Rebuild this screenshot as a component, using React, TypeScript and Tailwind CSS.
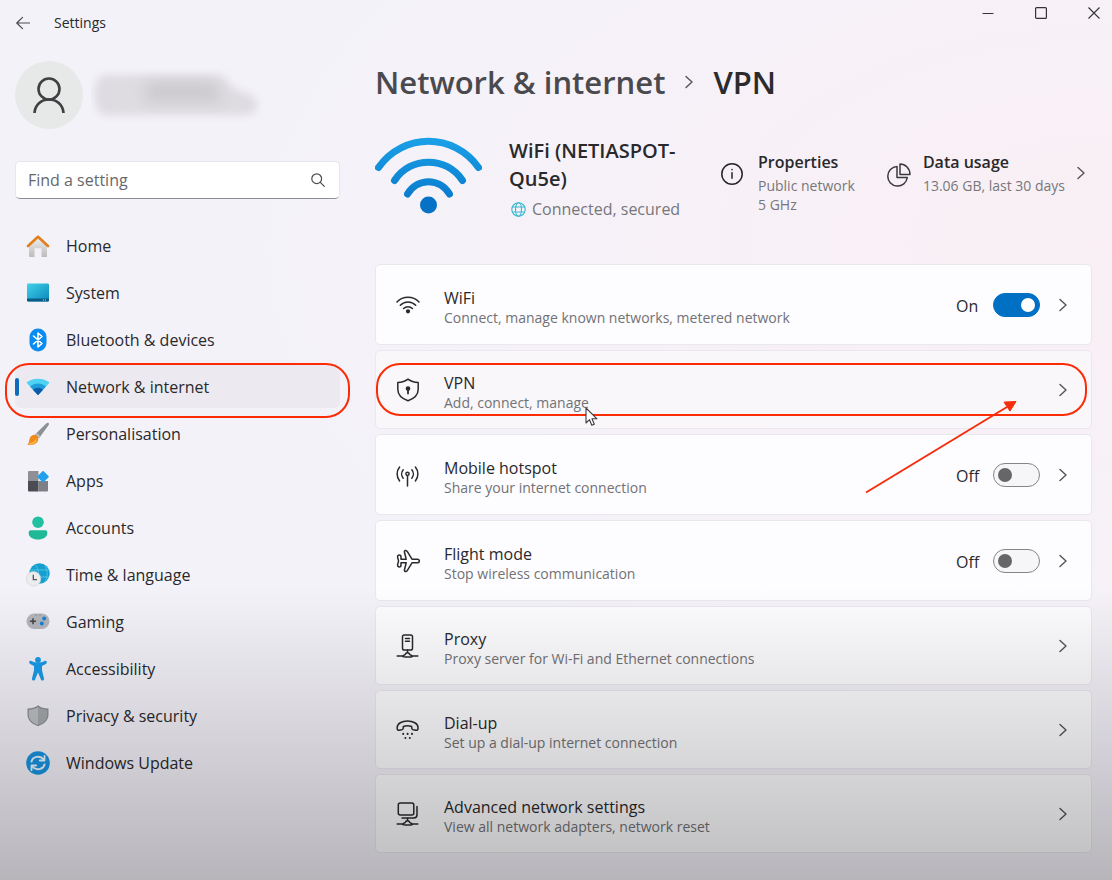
import { useId, useState, type ReactNode } from 'react'

type NavItem = { label: string; icon: ReactNode }
type Setting = { title: string; text: string; icon: ReactNode; toggle?: boolean; on?: boolean }

function HomeIcon() {
    return (
        <svg width="24" height="24" viewBox="0 0 24 24">
            <defs>
                <linearGradient id="home-wall" x1="0" y1="0" x2="0" y2="1">
                    <stop offset="0" stopColor="#f0eeee" />
                    <stop offset="1" stopColor="#bdbbbc" />
                </linearGradient>
            </defs>
            <path d="M3 10 12 3l9 7v12.200a.9.9 0 0 1-.9.9H15.500v-8a.8.8 0 0 0-.8-.8H9.300a.8.8 0 0 0-.8.8v8H3.900a.9.9 0 0 1-.9-.9Z" fill="url(#home-wall)" />
            <path d="M2 12 12 2.800 22 12" fill="none" stroke="#e07f1c" strokeWidth="2.600" strokeLinecap="round" strokeLinejoin="round" />
        </svg>
    )
}

function SystemIcon() {
    return (
        <svg width="24" height="24" viewBox="0 0 24 24">
            <defs>
                <linearGradient id="sys" x1="0" y1="0" x2="1" y2="1">
                    <stop offset="0" stopColor="#3fd3e8" />
                    <stop offset="1" stopColor="#0b86bb" />
                </linearGradient>
            </defs>
            <rect x="1" y="2.500" width="22" height="18" rx="1.200" fill="url(#sys)" />
            <path d="M1 17.500h22v1.800a1.200 1.200 0 0 1-1.200 1.200H2.200A1.200 1.200 0 0 1 1 19.300Z" fill="#0d5c86" />
            <path d="M17 19h1m1 0h1" stroke="#9fe0f5" strokeWidth="1" />
        </svg>
    )
}

function BluetoothIcon() {
    return (
        <svg width="24" height="24" viewBox="0 0 24 24">
            <rect x="3.500" y="0.500" width="17" height="23" rx="8.500" fill="#0a8bf2" />
            <path d="m7.500 8 8.500 7.500-4 3.500V5l4 3.500L7.500 16" fill="none" stroke="#fff" strokeWidth="1.600" strokeLinejoin="round" strokeLinecap="round" />
        </svg>
    )
}

function NetworkIcon() {
    return (
        <svg width="24" height="24" viewBox="0 0 24 24">
            <path d="M1 8.200a.8.8 0 0 1 0-1.100C7 2.600 17 2.600 23 7.100a.8.8 0 0 1 0 1.100L12.600 19.600a.8.8 0 0 1-1.200 0Z" fill="#4fd2f3" />
            <path d="M4 11.500c4.500-4 11.500-4 16 0l-7.400 8.100a.8.8 0 0 1-1.200 0Z" fill="#1e9fdc" />
            <path d="M7 14.800c3-2.600 7-2.600 10 0l-4.400 4.800a.8.8 0 0 1-1.200 0Z" fill="#0c5ba8" />
        </svg>
    )
}

function BrushIcon() {
    return (
        <svg width="24" height="24" viewBox="0 0 24 24">
            <path d="M22.300.8c.9.500.8 1.500.4 2.200L13 16.200 9 12.600 20.500 1.300c.5-.5 1.200-.8 1.800-.5Z" fill="#8c9196" />
            <path d="m10.800 10.900 3.600 3.300L13 16.200l-4-3.600Z" fill="#b9bdc1" />
            <path d="M8.600 12.800c2.600.3 4 2.200 3.700 4.600C11.700 22 6 23.700 1 22.500c1.800-1 1.900-2.400 2.300-4.600.5-3 2.600-5.300 5.300-5.100Z" fill="#f08a1d" />
            <path d="M4 21.500c2 0 5-1 6-3.500" fill="none" stroke="#ffc04d" strokeWidth="1.200" strokeLinecap="round" />
        </svg>
    )
}

function AppsIcon() {
    return (
        <svg width="24" height="24" viewBox="0 0 24 24">
            <path d="M3 2h9.500v10H2V3a1 1 0 0 1 1-1Z" fill="#8f9096" />
            <path d="M2 12h10.500v10.500H3a1 1 0 0 1-1-1Z" fill="#4b4c53" />
            <path d="M12.500 12H22v9.500a1 1 0 0 1-1 1h-8.500Z" fill="#7e7f86" />
            <rect x="13" y="3.500" width="8.600" height="8.600" rx="1" transform="rotate(45 17.300 7.500)" fill="#21a0ee" />
        </svg>
    )
}

function AccountsIcon() {
    return (
        <svg width="24" height="24" viewBox="0 0 24 24">
            <circle cx="12" cy="6.200" r="5.800" fill="#22bfa0" />
            <path d="M5 14.300h14a2.400 2.400 0 0 1 2.400 2.400c0 4.400-4.200 6.800-9.400 6.800s-9.400-2.400-9.400-6.800A2.400 2.400 0 0 1 5 14.300Z" fill="#1fb997" />
        </svg>
    )
}

function TimeIcon() {
    return (
        <svg width="24" height="24" viewBox="0 0 24 24">
            <circle cx="13.500" cy="10.500" r="10.200" fill="#149fd0" />
            <path d="M9 1.500c4 4 5 13 2 19M19 2.500c3 5 3 11 0 16M4 7h19M8 14h15" fill="none" stroke="#4cc3e2" strokeWidth="1" />
            <circle cx="7.500" cy="15.800" r="7.300" fill="#ececef" stroke="#cfd0d4" strokeWidth=".6" />
            <path d="M7.300 11.800v4.800h3.700" fill="none" stroke="#56575c" strokeWidth="1.300" />
        </svg>
    )
}

function GamingIcon() {
    return (
        <svg width="24" height="24" viewBox="0 0 24 24">
            <rect x=".5" y="3.500" width="23" height="15.500" rx="7.700" fill="#b4b6bb" />
            <path d="M4 11.300h6M7 8.300v6" stroke="#44454a" strokeWidth="1.500" />
            <circle cx="18.200" cy="8.500" r="2" fill="#1584d8" />
            <circle cx="15.800" cy="13.500" r="2" fill="#1584d8" />
            <path d="M9.500 5h1m3 0h1" stroke="#6d6e73" strokeWidth="1" />
        </svg>
    )
}

function AccessibilityIcon() {
    return (
        <svg width="24" height="24" viewBox="0 0 24 24">
            <circle cx="12" cy="3" r="2.900" fill="#1a9bea" />
            <path d="M3.300 4.600c.5-.9 1.400-1 2.200-.6 4 2.200 9 2.200 13 0 .8-.4 1.700-.3 2.200.6s0 1.800-.8 2.300L16 9v4.200l2 8.300c.2 1-.2 1.800-1.100 2-.9.300-1.700-.2-2-1.100L12 15.500l-2.900 6.900c-.3.900-1.100 1.400-2 1.100-.9-.2-1.300-1-1.100-2l2-8.300V9L4.100 6.900c-.8-.5-1.300-1.400-.8-2.300Z" fill="#1a9bea" />
        </svg>
    )
}

function ShieldIcon() {
    return (
        <svg width="24" height="24" viewBox="0 0 24 24">
            <path d="M12 1.200c2.800 2.200 6.300 3.200 10.500 3.200v6.400c0 5.500-4.500 9.500-10.500 11.400C6 20.300 1.500 16.300 1.500 10.800V4.400C5.700 4.400 9.200 3.400 12 1.200Z" fill="#8c9094" />
            <path d="M12 3c2.600 1.800 5.700 2.700 9.200 2.900v5c0 4.500-3.800 8.200-9.200 9.900Z" fill="#a5a9ac" />
            <path d="M12 3C9.400 4.800 6.300 5.700 2.800 5.900v5c0 4.500 3.800 8.200 9.200 9.900Z" fill="#bdc1c4" />
        </svg>
    )
}

function UpdateIcon() {
    return (
        <svg width="24" height="24" viewBox="0 0 24 24">
            <circle cx="12" cy="12" r="11.800" fill="#1894e2" />
            <path d="M5.500 10.500c1.200-5 8.500-6.600 12-2.200M18.500 13.500c-1.200 5-8.500 6.600-12 2.200" fill="none" stroke="#e8f6ff" strokeWidth="2" strokeLinecap="round" />
            <path d="M18.500 4.800v4.700h-4.700M5.500 19.200v-4.700h4.700" fill="none" stroke="#e8f6ff" strokeWidth="1.800" strokeLinecap="round" strokeLinejoin="round" />
        </svg>
    )
}

function LineIcon({ children }: { children: ReactNode }) {
    return (
        <svg width="24" height="24" viewBox="0 0 24 24" fill="none" stroke="#2a2a2d" strokeWidth="1.500" strokeLinecap="round" strokeLinejoin="round">
            {children}
        </svg>
    )
}

function Chevron({ className }: { className?: string }) {
    return (
        <svg className={className} width="8" height="14" viewBox="0 0 8 14" fill="none" stroke="#545457" strokeWidth="1.400" strokeLinecap="round" strokeLinejoin="round">
            <path d="m1 1.500 6 5.500-6 5.500" />
        </svg>
    )
}

const navItems: NavItem[] = [
    { label: 'Home', icon: <HomeIcon /> },
    { label: 'System', icon: <SystemIcon /> },
    { label: 'Bluetooth & devices', icon: <BluetoothIcon /> },
    { label: 'Network & internet', icon: <NetworkIcon /> },
    { label: 'Personalisation', icon: <BrushIcon /> },
    { label: 'Apps', icon: <AppsIcon /> },
    { label: 'Accounts', icon: <AccountsIcon /> },
    { label: 'Time & language', icon: <TimeIcon /> },
    { label: 'Gaming', icon: <GamingIcon /> },
    { label: 'Accessibility', icon: <AccessibilityIcon /> },
    { label: 'Privacy & security', icon: <ShieldIcon /> },
    { label: 'Windows Update', icon: <UpdateIcon /> },
]

const settings: Setting[] = [
    {
        title: 'WiFi',
        text: 'Connect, manage known networks, metered network',
        toggle: true,
        on: true,
        icon: (
            <LineIcon>
                <path d="M1 9c6-6.300 16-6.300 22 0M4.300 12.300c4.300-4.400 11.100-4.400 15.400 0M7.600 15.500c2.500-2.500 6.300-2.500 8.800 0" />
                <circle cx="12" cy="18.300" r="1.400" fill="#2a2a2d" />
            </LineIcon>
        ),
    },
    {
        title: 'VPN',
        text: 'Add, connect, manage',
        icon: (
            <LineIcon>
                <path d="M12 1.200c2.800 2.200 6.200 3.200 10.200 3.300v6.800c0 5.500-4.200 9.400-10.200 11.500C6 20.700 1.800 16.800 1.800 11.300V4.500C5.800 4.400 9.200 3.400 12 1.200Z" />
                <circle cx="12" cy="10.500" r="1.600" fill="#2a2a2d" />
                <path d="M12 11v4.500" strokeWidth="1.800" />
            </LineIcon>
        ),
    },
    {
        title: 'Mobile hotspot',
        text: 'Share your internet connection',
        toggle: true,
        icon: (
            <LineIcon>
                <path d="M3.600 4c-3.300 4-3.300 10 0 14M19.400 4c3.300 4 3.300 10 0 14M7.200 6.800c-2.100 2.500-2.100 6 0 8.400M15.800 6.800c2.100 2.500 2.100 6 0 8.400M11.500 12.500V23" />
                <circle cx="11.500" cy="10.800" r="1.600" />
            </LineIcon>
        ),
    },
    {
        title: 'Flight mode',
        text: 'Stop wireless communication',
        toggle: true,
        icon: (
            <LineIcon>
                <path d="M21.500 10.200a1.800 1.800 0 0 1 0 3.600H16l-4.600 7.600c-.6 1-1.400 1.400-2.200 1.100-.8-.3-.9-1-.7-1.800l1.700-6.900H5V16c0 1.200-.6 2-1.700 2s-1.700-.8-1.700-1.900c0-1.600.9-2.600.9-4.100s-.9-2.500-.9-4.100C1.600 6.800 2.200 6 3.300 6S5 6.800 5 8v2.200h5.200L8.500 3.300c-.2-.8-.1-1.500.7-1.800.8-.3 1.600.1 2.200 1.100l4.600 7.600Z" />
            </LineIcon>
        ),
    },
    {
        title: 'Proxy',
        text: 'Proxy server for Wi-Fi and Ethernet connections',
        icon: (
            <LineIcon>
                <rect x="6.500" y="1" width="10" height="15" rx="1.800" />
                <path d="M9.500 4.500h4M9.500 7.300h4M11.500 16v2.500M1.200 22h5.500M16.300 22h5.500M6.700 22.500c.5-1.300 1.400-1.700 2.300-1.800.6-1.500 1.300-2 2.500-2s1.900.5 2.500 2c.9.100 1.800.5 2.300 1.800-.5.700-9 .7-9.600 0Z" />
            </LineIcon>
        ),
    },
    {
        title: 'Dial-up',
        text: 'Set up a dial-up internet connection',
        icon: (
            <LineIcon>
                <path d="M1.200 9.500C1.200 5.500 6 3 11.500 3S22 5.500 22 9.500v1c0 1.300-.8 2-2 1.800l-2.800-.5c-.9-.2-1.500-.8-1.500-1.700V8.500c-2.700-1-5.700-1-8.400 0v1.600c0 .9-.6 1.500-1.500 1.700l-2.700.5c-1.200.2-1.900-.5-1.900-1.800Z" />
                <path d="M7.200 15.800v.1M11.600 15.800v.1M16 15.800v.1M9.400 20v.1M13.800 20v.1" strokeWidth="2" />
            </LineIcon>
        ),
    },
    {
        title: 'Advanced network settings',
        text: 'View all network adapters, network reset',
        icon: (
            <LineIcon>
                <rect x="2.300" y="1" width="15.500" height="12" rx="2" />
                <path d="M21 4.500v8.300a3.200 3.200 0 0 1-3.200 3.200H6M11.500 16v2.500M1.200 22h5.500M16.300 22h5.500M6.700 22.500c.5-1.300 1.400-1.700 2.300-1.800.6-1.500 1.300-2 2.500-2s1.900.5 2.500 2c.9.100 1.800.5 2.300 1.800-.5.700-9 .7-9.600 0Z" />
            </LineIcon>
        ),
    },
]

function Switch({ title, initial }: { title: string; initial: boolean }) {
    const id = useId()
    const [on, setOn] = useState(initial)

    return (
        <div className="flex items-center">
            <label htmlFor={id} className="w-[37px] pt-0.5 text-base text-[#2b2b2e]">{on ? 'On' : 'Off'}</label>
            <input
                id={id}
                type="checkbox"
                role="switch"
                title={title}
                checked={on}
                onChange={(e) => setOn(e.target.checked)}
                className="flex h-6 w-[47px] appearance-none items-center rounded-full border border-[#858588] bg-[#f6f5f7] px-1 before:h-3.5 before:w-3.5 before:rounded-full before:bg-[#666668] checked:justify-end checked:border-[#0070c5] checked:bg-[#0070c5] checked:before:bg-white"
            />
        </div>
    )
}

function SettingText({ item }: { item: Setting }) {
    return (
        <>
            {item.icon}
            <div className="min-w-0 flex-1 pt-1.5">
                <div className="text-base leading-5 text-[#29292c]">{item.title}</div>
                <div className="text-sm leading-5 text-[#727276]">{item.text}</div>
            </div>
        </>
    )
}

function SettingRow({ item }: { item: Setting }) {
    if (item.toggle) {
        return (
            <div className="flex min-h-[81px] items-center gap-6 rounded-[5px] border border-[#ebe7ef] bg-[#fdfcfe] pr-6 pl-5">
                <SettingText item={item} />
                <div className="flex items-center gap-[19px]">
                    <Switch title={item.title} initial={Boolean(item.on)} />
                    <button type="button" aria-label={`Open ${item.title}`}>
                        <Chevron />
                    </button>
                </div>
            </div>
        )
    }

    const active = item.title === 'VPN'
    return (
        <a
            href="#"
            className={`relative flex min-h-[79px] items-center gap-6 rounded-[5px] border border-[#ebe7ef] pr-6 pl-5 ${active ? 'bg-[#f9f7fa]' : 'bg-[#fdfcfe]'}`}
        >
            <SettingText item={item} />
            <Chevron />
            {active && (
                <>
                    <span className="pointer-events-none absolute top-3 right-1 bottom-3 left-0 rounded-[24px] border-2 border-[#fb2b05]" />
                    {/* Pointer */}
                    <svg className="absolute top-14 left-[209px]" width="14" height="20" viewBox="0 0 14 20">
                        <path d="M1 1v15l3.500-3.300 2.300 5.500 2.500-1-2.300-5.400h5Z" fill="#fff" stroke="#3b3b40" strokeWidth="1.100" strokeLinejoin="round" />
                    </svg>
                    {/* Arrow */}
                    <svg className="pointer-events-none absolute top-[49px] right-[74px] z-10" width="152" height="94" viewBox="0 0 152 94">
                        <path d="M1 92.500 142 7" stroke="#f42e0d" strokeWidth="2" />
                        <path d="m151 1.500-6 9.600-6-9Z" fill="#f42e0d" stroke="#f42e0d" />
                    </svg>
                </>
            )}
        </a>
    )
}

export default function App() {
    const [query, setQuery] = useState('')

    return (
        <div className="relative min-h-screen overflow-hidden bg-[#f4f2f9] bg-[radial-gradient(ellipse_at_100%_28%,#f9eff4_0%,#f7f1f7_24%,transparent_55%)] font-['Open_Sans','Noto_Sans',sans-serif] text-[#29292c]">
            {/* Title bar */}
            <header className="flex h-[46px] items-start justify-between pr-3 pl-4">
                <div className="flex h-[46px] items-center gap-6">
                    <button type="button" aria-label="Back">
                        <svg width="14" height="14" viewBox="0 0 14 14" fill="none" stroke="#4a4a4e" strokeWidth="1.200" strokeLinecap="round" strokeLinejoin="round">
                            <path d="M13.500 7H1M6.500 1.300.8 7l5.700 5.700" />
                        </svg>
                    </button>
                    <span className="text-sm">Settings</span>
                </div>
                <div className="flex gap-[41px] pt-[7px]">
                    <button type="button" aria-label="Minimise">
                        <svg width="12" height="12" viewBox="0 0 12 12"><path d="M.5 6.500h11" stroke="#333" /></svg>
                    </button>
                    <button type="button" aria-label="Maximise">
                        <svg width="12" height="12" viewBox="0 0 12 12"><rect x=".6" y=".6" width="10.800" height="10.800" rx="1" fill="none" stroke="#333" strokeWidth="1.200" /></svg>
                    </button>
                    <button type="button" aria-label="Close">
                        <svg width="12" height="12" viewBox="0 0 12 12"><path d="m.5.5 11 11m0-11-11 11" stroke="#333" strokeWidth="1.100" /></svg>
                    </button>
                </div>
            </header>

            <div className="flex gap-[35px] pr-5 pb-6 pl-[15px]">
                {/* Sidebar */}
                <aside className="w-[325px] shrink-0 pt-[15px]">
                    <div className="flex items-center gap-2">
                        <div className="flex size-[68px] items-center justify-center rounded-full bg-[#e7e9e9]">
                            <svg width="32" height="36" viewBox="0 0 32 36" fill="none" stroke="#3e4042" strokeWidth="2.600">
                                <circle cx="16" cy="12" r="10.500" />
                                <path d="M1.500 36C2 28 8 22.500 16 22.500S30 28 30.500 36" />
                            </svg>
                        </div>
                        <svg width="172" height="54" viewBox="0 0 172 54">
                            <filter id="soft" x="-10%" y="-20%" width="120%" height="140%">
                                <feGaussianBlur stdDeviation="4" />
                            </filter>
                            <filter id="softer" x="-20%" y="-60%" width="140%" height="220%">
                                <feGaussianBlur stdDeviation="7" />
                            </filter>
                            <path d="M14 7h112c10 0 12 12 22 16 24 4 24 24 4 24H14C0 47 0 7 14 7Z" fill="#dedce1" filter="url(#soft)" />
                            <path d="M54 14h70l8 20H54Z" fill="#cccacf" filter="url(#softer)" />
                        </svg>
                    </div>

                    <div className="mt-8 flex h-[38px] items-center rounded-[5px] border border-[#e8e6ec] border-b-[#8f8e94] bg-white pr-3.5 pl-3">
                        <input
                            type="search"
                            aria-label="Find a setting"
                            placeholder="Find a setting"
                            value={query}
                            onChange={(e) => setQuery(e.target.value)}
                            className="min-w-0 flex-1 bg-transparent text-base outline-none placeholder:text-[#67676b]"
                        />
                        <svg width="14" height="14" viewBox="0 0 14 14" fill="none" stroke="#4c4c50" strokeWidth="1.200" strokeLinecap="round">
                            <circle cx="5.700" cy="5.700" r="4.900" />
                            <path d="m9.300 9.300 4 4" />
                        </svg>
                    </div>

                    <nav className="mt-[25px] flex flex-col gap-1">
                        {navItems.map((item) => {
                            const active = item.label === 'Network & internet'
                            return (
                                <a
                                    key={item.label}
                                    href="#"
                                    className={`relative flex h-[43px] items-center gap-4 rounded-[5px] pl-[11px] text-base ${active ? 'bg-[#eceaf0]' : ''}`}
                                >
                                    {active && (
                                        <>
                                            <span className="absolute left-0 h-[18px] w-1 rounded-full bg-[#0f6cb8]" />
                                            <span className="pointer-events-none absolute -inset-x-2.5 -top-0.5 -bottom-2.5 rounded-[24px] border-2 border-[#fb2b05]" />
                                        </>
                                    )}
                                    {item.icon}
                                    <span>{item.label}</span>
                                </a>
                            )
                        })}
                    </nav>
                </aside>

                {/* Content */}
                <main className="min-w-0 flex-1 pt-3.5">
                    <h1 className="flex h-11 items-center text-[31px] font-semibold">
                        <a href="#" className="text-[#4a4a4e]">Network &amp; internet</a>
                        <Chevron className="mx-5" />
                        <span className="text-[#2b2b2e]">VPN</span>
                    </h1>

                    <section className="mt-[33px] flex items-start">
                        <svg className="shrink-0" width="107" height="77" viewBox="0 0 107 77" fill="none">
                            <defs>
                                <linearGradient id="wifi" x1="0" y1="0" x2="0" y2="77" gradientUnits="userSpaceOnUse">
                                    <stop offset="0" stopColor="#1ba1e8" />
                                    <stop offset="1" stopColor="#0672c6" />
                                </linearGradient>
                            </defs>
                            <g stroke="url(#wifi)" strokeWidth="7" strokeLinecap="round">
                                <path d="M3.500 30.500C28-4.500 79-4.500 103.500 30.500" />
                                <path d="M19.500 43.500c16-24.500 52-24.500 68 0" />
                                <path d="M32.500 57c9.500-16.500 32.500-16.500 42 0" />
                            </g>
                            <circle cx="53.500" cy="68" r="8.500" fill="#0672c6" />
                        </svg>
                        <div className="ml-[27px] w-[180px] shrink-0">
                            <h2 className="text-xl leading-7 font-semibold">WiFi (NETIASPOT-Qu5e)</h2>
                            <p className="mt-1 flex items-center gap-1.5 text-base leading-6 text-[#77777b]">
                                <svg className="ml-0.5 shrink-0" width="15" height="15" viewBox="0 0 15 15" fill="none" stroke="#38b9cf" strokeWidth="1.100">
                                    <circle cx="7.500" cy="7.500" r="6.700" />
                                    <ellipse cx="7.500" cy="7.500" rx="3" ry="6.700" />
                                    <path d="M1.300 5h12.400M1.300 10h12.400" />
                                </svg>
                                <span className="whitespace-nowrap">Connected, secured</span>
                            </p>
                        </div>
                        <div className="mt-[15px] ml-8 flex gap-[15px]">
                            <svg className="mt-[11px] shrink-0" width="22" height="22" viewBox="0 0 22 22" fill="none" stroke="#252528" strokeWidth="1.500" strokeLinecap="round">
                                <circle cx="11" cy="11" r="10.200" />
                                <path d="M11 9.800v5.500M11 6.600v.1" />
                            </svg>
                            <div className="whitespace-nowrap">
                                <h3 className="mb-1 text-base leading-5 font-semibold">Properties</h3>
                                <p className="text-sm leading-[19px] text-[#77777b]">Public network<br />5 GHz</p>
                            </div>
                        </div>
                        <a href="#" className="mt-[15px] ml-auto flex gap-3">
                            <svg className="mt-[11px] shrink-0" width="24" height="24" viewBox="0 0 24 24" fill="none" stroke="#3a3a3e" strokeWidth="1.500" strokeLinejoin="round">
                                <path d="M10 3.500a9.800 9.800 0 1 0 10.300 11H10Z" />
                                <path d="M13 1c5.500 0 10 4.500 10 10.500H13Z" />
                            </svg>
                            <div className="whitespace-nowrap">
                                <h3 className="mb-1 text-base leading-5 font-semibold">Data usage</h3>
                                <p className="text-sm leading-[19px] text-[#77777b]">13.06 GB, last 30 days</p>
                            </div>
                            <Chevron className="mt-3.5 mr-[7px]" />
                        </a>
                    </section>

                    <section className="mt-[43px] flex flex-col gap-[5px]">
                        {settings.map((item) => (
                            <SettingRow key={item.title} item={item} />
                        ))}
                    </section>
                </main>
            </div>

            {/* Bottom shade */}
            <div className="pointer-events-none absolute inset-x-0 bottom-0 z-20 h-1/3 bg-linear-to-b from-transparent to-black/25" />
        </div>
    )
}
